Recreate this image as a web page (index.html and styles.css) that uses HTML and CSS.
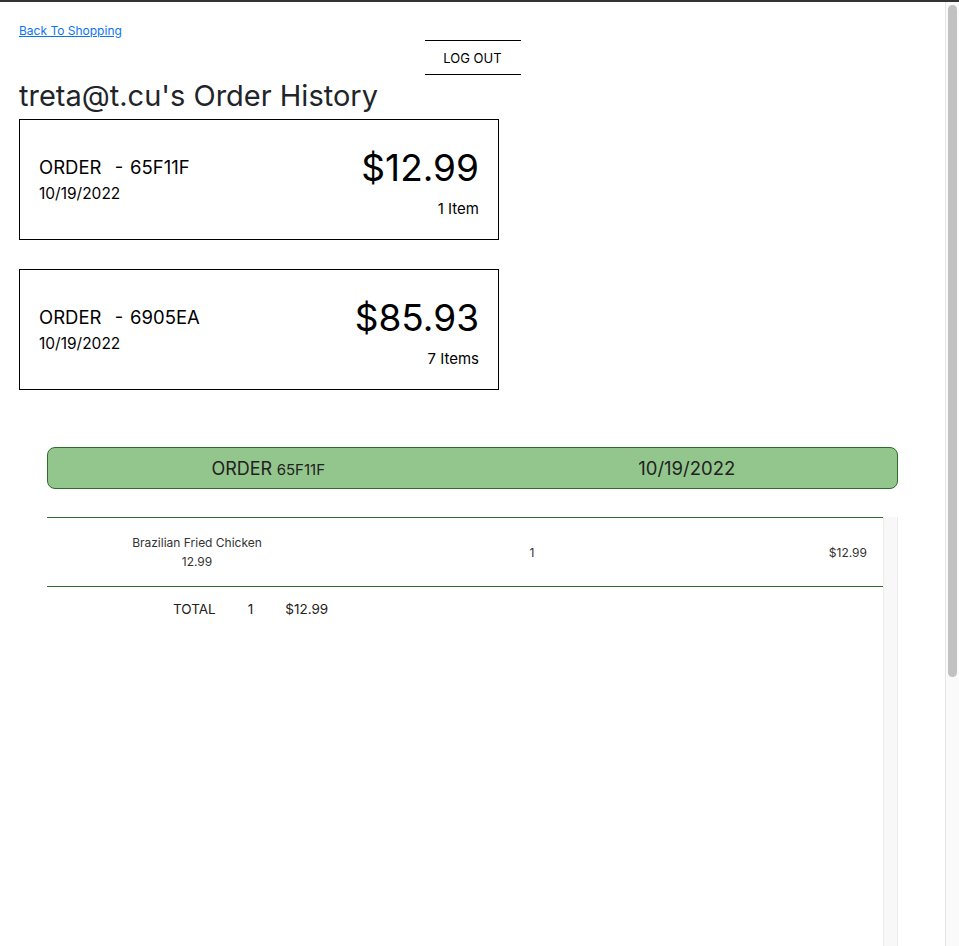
FILE: index.html
```html
<!DOCTYPE html>
<html lang="en">
<head>
<meta charset="utf-8">
<title>Order History</title>
<link rel="stylesheet" href="styles.css">
</head>
<body>
<div class="window">
  <div class="page">
    <a class="back-link" href="#">Back To Shopping</a>
    <div class="logout-row">
      <button class="logout-btn" type="button">LOG OUT</button>
    </div>
    <h1 class="title">treta@t.cu's Order History</h1>

    <div class="order-card">
      <div class="order-left">
        <div class="order-id">ORDER  - 65F11F</div>
        <div class="order-date">10/19/2022</div>
      </div>
      <div class="order-right">
        <div class="order-total">$12.99</div>
        <div class="order-count">1 Item</div>
      </div>
    </div>

    <div class="order-card">
      <div class="order-left">
        <div class="order-id">ORDER  - 6905EA</div>
        <div class="order-date">10/19/2022</div>
      </div>
      <div class="order-right">
        <div class="order-total">$85.93</div>
        <div class="order-count">7 Items</div>
      </div>
    </div>

    <section class="detail">
      <div class="detail-bar">
        <div class="detail-cell detail-order"><span class="detail-word">ORDER</span> <span class="detail-code">65F11F</span></div>
        <div class="detail-cell detail-date">10/19/2022</div>
      </div>
      <div class="orders-scroll">
        <div class="orders-content">
          <div class="item-row">
            <div class="item-name">
              <div>Brazilian Fried Chicken</div>
              <div>12.99</div>
            </div>
            <div class="item-qty">1</div>
            <div class="item-price">$12.99</div>
          </div>
          <div class="total-row">
            <span>TOTAL</span>
            <span>1</span>
            <span>$12.99</span>
          </div>
        </div>
        <div class="inner-track"></div>
      </div>
    </section>
  </div>
  <div class="page-scrollbar">
    <div class="page-thumb"></div>
  </div>
</div>
</body>
</html>
```

FILE: styles.css
```css
html, body {
  margin: 0;
  height: 100%;
  background: #fff;
}

body {
  font-family: Inter, "Noto Sans", sans-serif;
  color: #212529;
  overflow: hidden;
}

.window {
  height: 946px;
  box-sizing: border-box;
  border-top: 2px solid #333;
  display: flex;
  overflow: hidden;
}

.page {
  flex: 1;
  min-width: 0;
  padding: 17px 19px 0;
}

.page-scrollbar {
  width: 14px;
  box-sizing: border-box;
  flex: none;
  background: #fafafa;
  border-left: 1px solid #e6e6e6;
  padding: 3px 2px 0 2px;
}
.page-thumb {
  width: 9px;
  height: 672px;
  background: #c1c1c1;
  border-radius: 5px;
}

.back-link {
  font-size: 12px;
  line-height: 16px;
  color: #0a74f5;
  text-decoration: underline;
}

.logout-row {
  display: flex;
  justify-content: center;
  margin-top: 1px;
}

.logout-btn {
  width: 96px;
  height: 35px;
  background: #fff;
  border: 0;
  border-top: 1px solid #000;
  border-bottom: 1px solid #000;
  font-family: inherit;
  font-size: 13px;
  color: #000;
  padding: 0;
}

.title {
  margin: 3px 0 0;
  font-size: 29px;
  font-weight: 400;
  line-height: 36px;
  color: #212529;
}

.order-card {
  width: 480px;
  box-sizing: border-box;
  height: 121px;
  border: 1px solid #000;
  margin-top: 5px;
  margin-bottom: 29px;
  padding: 0 19px;
  display: flex;
  justify-content: space-between;
  color: #000;
}
.order-card + .order-card {
  margin-top: 0;
}

.order-left {
  padding-top: 36px;
}
.order-id {
  font-size: 18.5px;
  line-height: 22px;
  white-space: pre;
  word-spacing: 1.5px;
}
.order-date {
  font-size: 15.5px;
  line-height: 20px;
  margin-top: 6px;
}

.order-right {
  text-align: right;
  padding-top: 25px;
}
.order-total {
  font-size: 37px;
  line-height: 46px;
}
.order-count {
  font-size: 15px;
  line-height: 20px;
  margin-top: 8px;
}

.detail {
  margin: 57px 28px 0;
}

.detail-bar {
  display: grid;
  grid-template-columns: 1fr 1fr;
  height: 42px;
  box-sizing: border-box;
  background: #93c68c;
  border: 1px solid #2f6b2b;
  border-radius: 8px;
  align-items: center;
  color: #222;
}
.detail-cell {
  text-align: center;
}
.detail-order {
  padding-left: 16px;
}
.detail-date {
  padding-left: 4px;
  font-size: 18.5px;
}
.detail-word {
  font-size: 18px;
}
.detail-code {
  font-size: 15px;
}

.orders-scroll {
  margin-top: 28px;
  height: 440px;
  display: flex;
}
.orders-content {
  flex: 1;
  min-width: 0;
}
.inner-track {
  width: 13px;
  flex: none;
  background: #f8f8f8;
  border-left: 1px solid #ebebeb;
  border-right: 1px solid #ebebeb;
}

.item-row {
  display: grid;
  grid-template-columns: 300px 370px 1fr;
  height: 70px;
  box-sizing: border-box;
  border-top: 1px solid #2f6b2b;
  border-bottom: 1px solid #2f6b2b;
  align-items: center;
  font-size: 12px;
  line-height: 19px;
  color: #333;
}
.item-name {
  text-align: center;
}
.item-qty {
  text-align: center;
}
.item-price {
  text-align: right;
  padding-right: 16px;
}

.total-row {
  display: flex;
  gap: 32px;
  padding-left: 126px;
  padding-top: 12px;
  font-size: 13.5px;
  line-height: 20px;
  color: #222;
}
```
